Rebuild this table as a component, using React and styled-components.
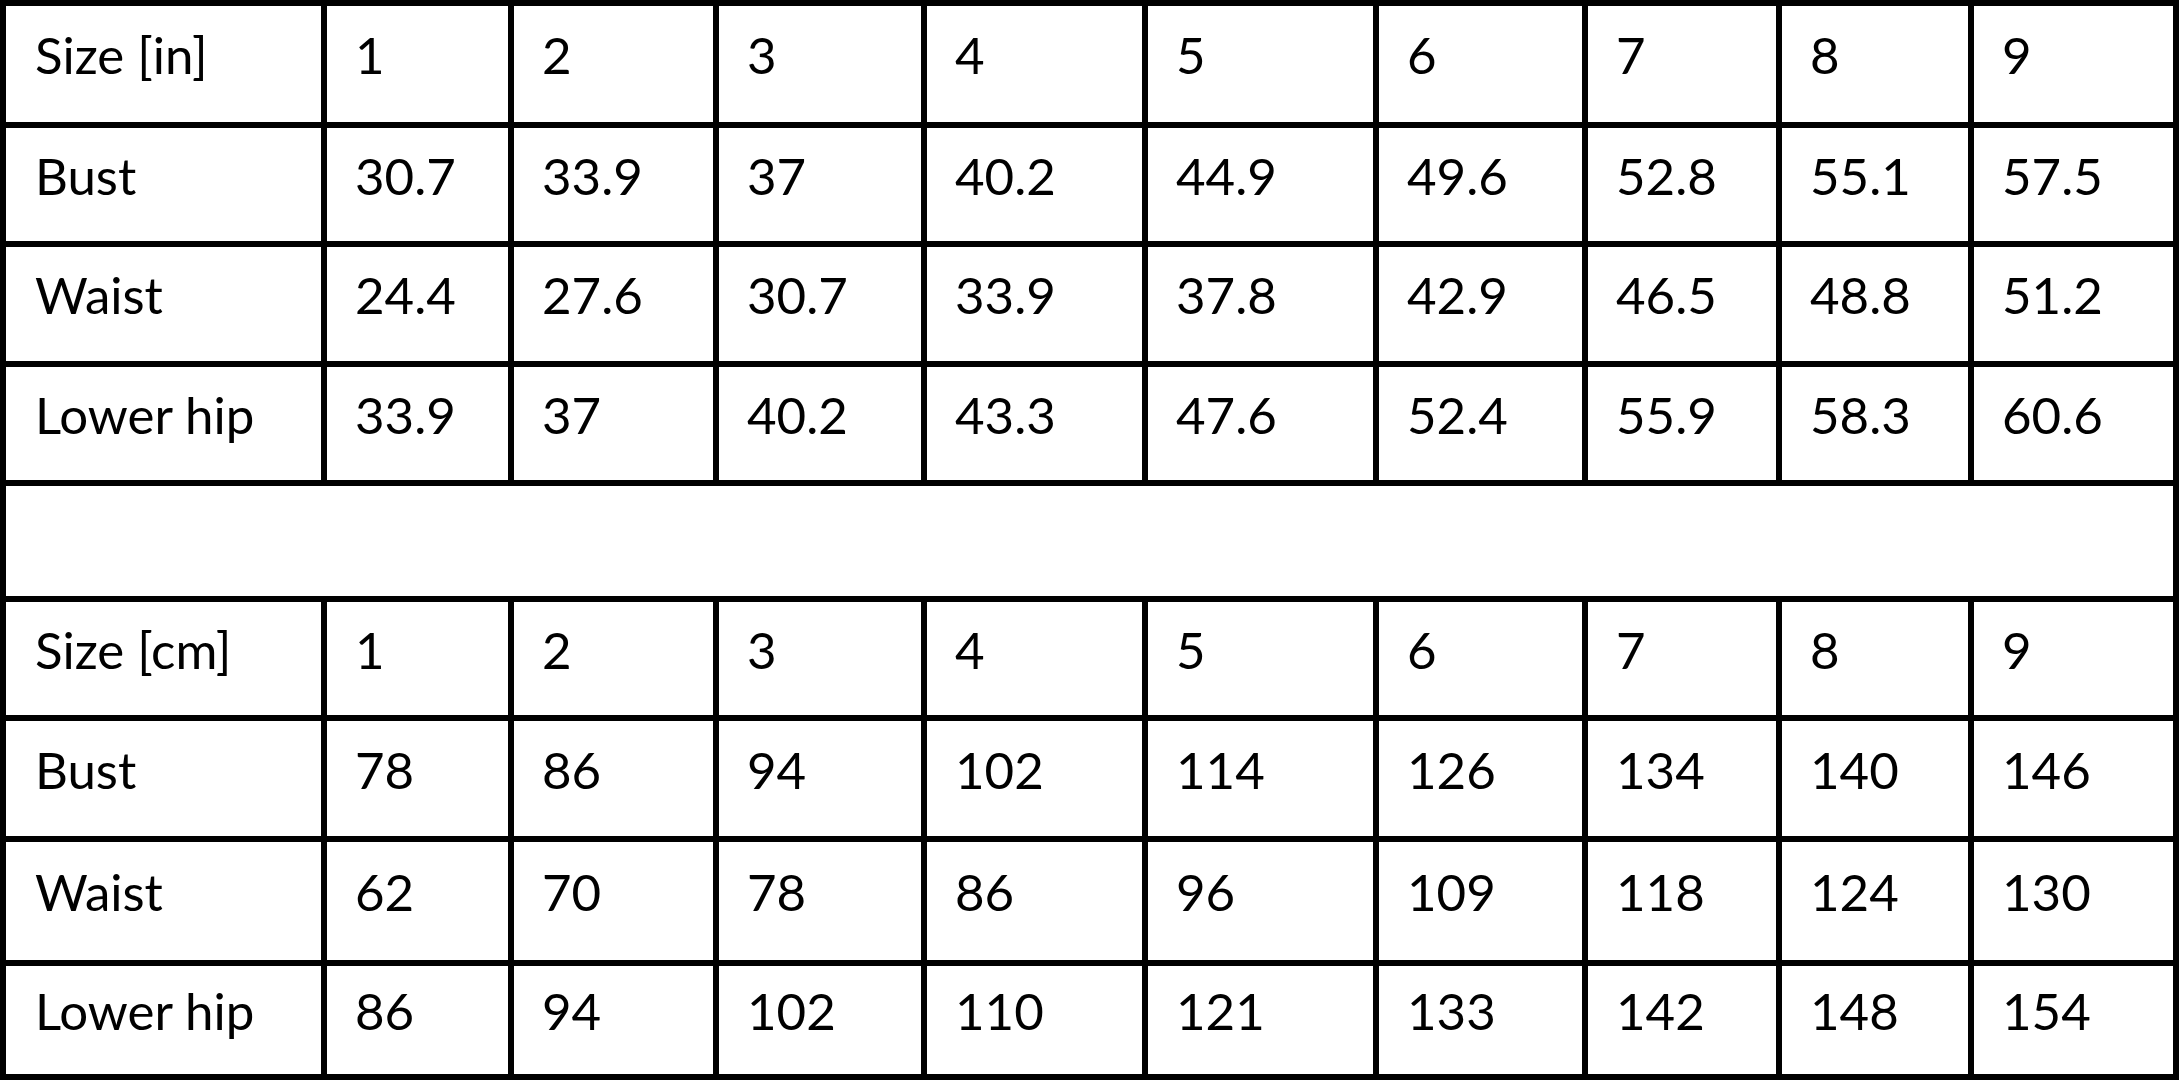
import React from "react";
import styled, { createGlobalStyle } from "styled-components";

const GlobalStyle = createGlobalStyle`
    html, body {
        margin: 0;
        padding: 0;
        background: #ffffff;
    }

    body {
        font-family: Lato, "Open Sans", "Liberation Sans", sans-serif;
        color: #000000;
    }
`;

const Chart = styled.div`
    display: grid;
    grid-template-columns: 315px 181px 199px 202px 215px 225px 203px 188px 186px 199px;
    grid-template-rows: 116px 113px 114px 113px 110px 113px 115px 118px 108px;
    gap: 6px;
    padding: 6px;
    width: 2179px;
    box-sizing: border-box;
    background: #000000;
`;

const Cell = styled.div`
    display: flex;
    align-items: center;
    padding: 0 0 18px ${({ $first }) => ($first ? "29px" : "28px")};
    background: #ffffff;
    font-size: 51px;
    line-height: 1.2;
    white-space: nowrap;
`;

const Spacer = styled.div`
    grid-column: 1 / -1;
    background: #ffffff;
`;

const sizes = ["1", "2", "3", "4", "5", "6", "7", "8", "9"];

const charts = [
    {
        unit: "in",
        rows: [
            ["Bust", "30.7", "33.9", "37", "40.2", "44.9", "49.6", "52.8", "55.1", "57.5"],
            ["Waist", "24.4", "27.6", "30.7", "33.9", "37.8", "42.9", "46.5", "48.8", "51.2"],
            ["Lower hip", "33.9", "37", "40.2", "43.3", "47.6", "52.4", "55.9", "58.3", "60.6"],
        ],
    },
    {
        unit: "cm",
        rows: [
            ["Bust", "78", "86", "94", "102", "114", "126", "134", "140", "146"],
            ["Waist", "62", "70", "78", "86", "96", "109", "118", "124", "130"],
            ["Lower hip", "86", "94", "102", "110", "121", "133", "142", "148", "154"],
        ],
    },
];

const renderRow = (cells, key) =>
    cells.map((value, i) => (
        <Cell key={`${key}-${i}`} $first={i === 0}>
            {value}
        </Cell>
    ));

const SizeChart = () => {
    return (
        <Chart>
            {charts.map((chart, index) => (
                <React.Fragment key={chart.unit}>
                    {index > 0 && <Spacer />}
                    {renderRow([`Size [${chart.unit}]`, ...sizes], `${chart.unit}-head`)}
                    {chart.rows.map((row) => renderRow(row, `${chart.unit}-${row[0]}`))}
                </React.Fragment>
            ))}
        </Chart>
    );
};

const App = () => (
    <>
        <GlobalStyle />
        <SizeChart />
    </>
);

export default App;
